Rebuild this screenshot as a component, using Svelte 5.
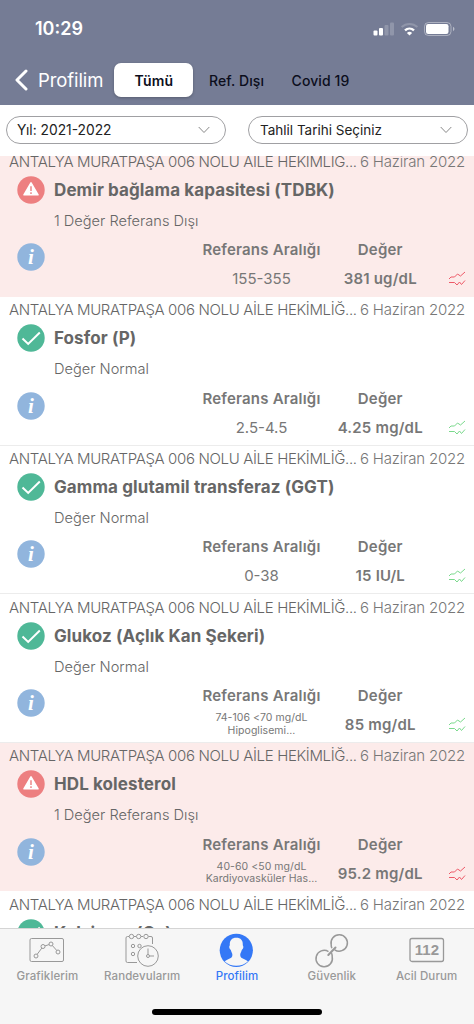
<script>
  const clinic = 'ANTALYA MURATPAŞA 006 NOLU AİLE HEKİMLİĞ...'
  const date = '6 Haziran 2022'

  let tabs = ['Tümü', 'Ref. Dışı', 'Covid 19']
  let activeTab = $state('Tümü')

  let results = [
    { name: 'Demir bağlama kapasitesi (TDBK)', range: ['155-355'], value: '381 ug/dL', alert: true },
    { name: 'Fosfor (P)', range: ['2.5-4.5'], value: '4.25 mg/dL' },
    { name: 'Gamma glutamil transferaz (GGT)', range: ['0-38'], value: '15 IU/L' },
    { name: 'Glukoz (Açlık Kan Şekeri)', range: ['74-106 <70 mg/dL', 'Hipoglisemi...'], value: '85 mg/dL' },
    { name: 'HDL kolesterol', range: ['40-60 <50 mg/dL', 'Kardiyovasküler Has...'], value: '95.2 mg/dL', alert: true },
    { name: 'Kalsiyum (Ca)' }
  ]
</script>

<div class="app">
  <header>
    <div class="status">
      <span class="clock">10:29</span>
      <svg width="84" height="16" viewBox="0 0 84 16">
        <g fill="#fff">
          <rect x="1.500" y="9.500" width="4" height="5" rx="1" />
          <rect x="7" y="7" width="4" height="7.500" rx="1" />
          <rect x="12.500" y="4" width="4" height="10.500" rx="1" opacity=".2" />
          <rect x="18" y="1.500" width="4" height="13" rx="1" opacity=".2" />
          <path d="M37.500 14.500l-2.600-2.600a3.800 3.800 0 0 1 5.200 0z" />
        </g>
        <path d="M33 9.400a6.700 6.700 0 0 1 9 0" fill="none" stroke="#fff" stroke-width="2.400" />
        <path d="M29.600 6a11.600 11.600 0 0 1 15.800 0" fill="none" stroke="#fff" stroke-width="2" opacity=".2" />
        <rect x="52.500" y="1.500" width="26.500" height="13" rx="4" fill="none" stroke="#fff" opacity=".4" />
        <rect x="54" y="3" width="22.500" height="10" rx="2.200" fill="#fff" />
        <path d="M81 5.800q3 2.200 0 4.400z" fill="#fff" opacity=".5" />
      </svg>
    </div>
    <nav>
      <button class="back">
        <svg width="14" height="22" viewBox="0 0 14 22"><path d="M12 2L3 11l9 9" fill="none" stroke="#fff" stroke-width="3" stroke-linecap="round" stroke-linejoin="round" /></svg>
        <span>Profilim</span>
      </button>
      <div class="tabs">
        {#each tabs as tab}
          <button class="tab" class:active={tab === activeTab} onclick={() => (activeTab = tab)}>{tab}</button>
        {/each}
      </div>
    </nav>
  </header>

  <div class="filters">
    {#each ['Yıl: 2021-2022', 'Tahlil Tarihi Seçiniz'] as label, i}
      <button class="select" class:year={i === 0}>
        <span>{label}</span>
        <svg width="12" height="8" viewBox="0 0 12 8"><path d="M.7 1L6 6.500 11.300 1" fill="none" stroke="#888" /></svg>
      </button>
    {/each}
  </div>

  <main>
    {#each results as item}
      <article class:alert={item.alert}>
        <div class="source">
          <span class="clinic">{clinic}</span>
          <span class="date">{date}</span>
        </div>
        <div class="title">
          <svg class="mark" width="28" height="28" viewBox="0 0 28 28">
            {#if item.alert}
              <circle cx="14" cy="14" r="13.700" fill="#ed7f80" />
              <path d="M13.300 6.600q.7-1.200 1.400 0l7 11.900q.5 1-.6 1H6.900q-1.100 0-.6-1z" fill="#fff" />
              <path d="M14 10.300v4.700M14 16.200v1.700" stroke="#ed7f80" stroke-width="1.400" />
            {:else}
              <circle cx="14" cy="14" r="13.700" fill="#4fb897" />
              <path d="M5.500 14.500l5.700 5.400L22.800 8.500" fill="none" stroke="#fff" stroke-width="2" />
            {/if}
          </svg>
          <h2>{item.name}</h2>
        </div>
        {#if item.value}
          <p class="note">{item.alert ? '1 Değer Referans Dışı' : 'Değer Normal'}</p>
          <div class="details">
            <svg class="info" width="28" height="28" viewBox="0 0 28 28">
              <circle cx="14" cy="14" r="13.700" fill="#91b5dd" />
              <text x="14" y="21" text-anchor="middle">i</text>
            </svg>
            <div class="range">
              <h3>Referans Aralığı</h3>
              <div class="amount" class:small={item.range.length > 1}>
                {#each item.range as line}<span>{line}</span>{/each}
              </div>
            </div>
            <div class="value">
              <h3>Değer</h3>
              <div class="amount"><b>{item.value}</b></div>
            </div>
            <svg class="trend" width="18" height="15" viewBox="0 0 18 15">
              <path d="M1 8l2-2h3.500L9.500 3l3 2L17 1M1 11.500h5.500L9 14l2.500-3 2 2.500L17 9.500" />
            </svg>
          </div>
        {/if}
      </article>
    {/each}
  </main>

  <footer>
    <div class="menu">
      <div class="item">
        <svg width="36" height="36" viewBox="0 0 36 36">
          <rect x="1" y="5.500" width="33.500" height="23" rx="1.500" />
          <circle cx="7" cy="23" r="2" /><circle cx="14" cy="13.500" r="2" /><circle cx="22" cy="11" r="2" /><circle cx="29" cy="19" r="2" />
          <path d="M8.200 21.300l4.600-6.200M16 12.900l4-1.300M23.300 12.500l4.500 5" />
        </svg>
        <span>Grafiklerim</span>
      </div>
      <div class="item">
        <svg width="36" height="36" viewBox="0 0 36 36">
          <path d="M5 3.500H3.500Q2 3.500 2 5v23q0 1.500 1.500 1.500H13M10 3.500h2M17 3.500h2M24.500 3.500h2.500q1.500 0 1.500 1.500v6" />
          <circle cx="7.500" cy="3.500" r="2.200" /><circle cx="14.700" cy="3.500" r="2.200" /><circle cx="22" cy="3.500" r="2.200" />
          <circle cx="9" cy="13" r="1.700" /><circle cx="15.500" cy="13" r="1.700" /><circle cx="9" cy="21" r="1.700" />
          <circle cx="24" cy="23" r="10.300" />
          <path d="M24 15.500v6M25.500 23H30" /><circle cx="24" cy="23" r="1.500" />
        </svg>
        <span>Randevularım</span>
      </div>
      <div class="item current">
        <svg width="36" height="36" viewBox="0 0 36 36">
          <circle class="solid" cx="17.300" cy="17.300" r="16.600" />
          <path class="face" d="M17.300 4.800c-4.500 0-6.700 2.700-6.500 7 .1 1.300-.8 1-.5 2.700.3 1.500 1 2 1.500 2.400.6 2.500 1.600 3 1.600 5.100 0 2.600-1.500 3.200-4.700 4.500-1.400.6-2.400 1.300-3 2.100 5.800 5.600 17.400 5.600 23.200 0-.6-.8-1.600-1.500-3-2.100-3.200-1.300-4.700-1.900-4.700-4.500 0-2.100 1-2.600 1.600-5.100.5-.4 1.200-.9 1.500-2.400.3-1.700-.6-1.400-.5-2.700.2-4.300-2-7-6.500-7z" />
        </svg>
        <span>Profilim</span>
      </div>
      <div class="item">
        <svg width="36" height="36" viewBox="0 0 36 36">
          <g stroke-width="1.500">
            <path d="M14.500 18.600a8.200 8.200 0 1 0 3.700 5.200q.1-2-.7-3.800" />
            <path d="M20.700 16.800a8.200 8.200 0 1 0-3.500-5q-.1 1.800.7 3.500" />
            <path d="M14.300 22l7.200-7.500" stroke-width="2" stroke-linecap="round" />
          </g>
        </svg>
        <span>Güvenlik</span>
      </div>
      <div class="item">
        <svg width="36" height="36" viewBox="0 0 36 36">
          <rect x="1" y="5.500" width="33.500" height="23" rx="2" stroke-width="1.300" />
          <text x="18" y="22" text-anchor="middle">112</text>
        </svg>
        <span>Acil Durum</span>
      </div>
    </div>
    <div class="home"></div>
  </footer>
</div>

<style>
  :global(body) {
    background: #fff;
  }

  .app {
    width: 474px;
    height: 1024px;
    display: flex;
    flex-direction: column;
    overflow: hidden;
    font-family: Inter, "Noto Sans", sans-serif;
    color: #666;
  }

  button {
    border: 0;
    padding: 0;
    background: none;
    font: inherit;
    color: inherit;
  }

  h2, h3, p {
    margin: 0;
  }

  svg {
    display: block;
    flex: none;
  }

  header {
    flex: none;
    height: 105px;
    background: #757c95;
  }

  .status {
    height: 57px;
    padding: 0 18px 0 35px;
    display: flex;
    align-items: center;
    justify-content: space-between;
    color: #fff;
  }

  .clock {
    font-size: 18px;
    font-weight: 600;
  }

  nav {
    display: flex;
    align-items: center;
    height: 46px;
    padding-left: 14px;
  }

  .back {
    display: flex;
    align-items: center;
    gap: 10px;
    width: 100px;
    color: #fff;
    font-size: 18.500px;
    letter-spacing: -.1px;
    white-space: nowrap;
  }

  .tabs {
    display: flex;
  }

  .tab {
    height: 34px;
    padding: 0 13.500px 0 14px;
    font-size: 14px;
    font-weight: 500;
    letter-spacing: .1px;
    color: #0c0e1c;
    white-space: nowrap;
  }

  .tab.active {
    width: 79px;
    margin-right: 2px;
    background: #fff;
    border-radius: 7px;
    font-weight: 600;
    box-shadow: 0 1px 3px rgba(0, 0, 0, .25);
  }

  .filters {
    flex: none;
    height: 51px;
    padding: 11px 6px 0 6px;
    box-sizing: border-box;
    display: flex;
    justify-content: space-between;
  }

  .select {
    width: 220px;
    height: 28px;
    padding: 0 15px 0 11px;
    border: 1px solid #a0a0a3;
    border-radius: 14px;
    display: flex;
    align-items: center;
    justify-content: space-between;
    font-size: 13.500px;
    color: #222;
  }

  .year {
    padding-left: 10px;
    font-size: 13.800px;
  }

  main {
    flex: 1;
    min-height: 0;
    overflow: hidden;
  }

  article {
    height: 148.600px;
    box-sizing: border-box;
    padding-top: 3.400px;
    border-bottom: 1px solid #ececec;
  }

  article:first-child {
    margin-top: -7.600px;
  }

  article.alert {
    background: #fcebea;
    border-bottom-color: #fcebea;
  }

  .source {
    display: flex;
    justify-content: space-between;
    height: 19px;
    line-height: 19px;
    padding: 0 9px;
    font-size: 15px;
    font-weight: 300;
    white-space: nowrap;
  }

  .clinic {
    letter-spacing: -.350px;
  }

  .date {
    letter-spacing: -.200px;
    color: #777;
  }

  .title {
    display: flex;
    align-items: center;
    gap: 9px;
    height: 28px;
    margin-top: 5px;
    padding: 0 17px;
  }

  h2 {
    font-size: 17px;
    font-weight: 700;
    letter-spacing: .1px;
    white-space: nowrap;
  }

  .note {
    height: 20px;
    margin: 7px 0 0 54px;
    line-height: 20px;
    font-size: 14.600px;
    font-weight: 300;
  }

  .details {
    display: flex;
    margin-top: 8.500px;
    padding-left: 17px;
  }

  .info {
    margin-top: 4px;
  }

  .info text {
    font: italic bold 21px "Liberation Serif", serif;
    fill: #fff;
  }

  .range {
    width: 134px;
    margin-left: 149.500px;
    text-align: center;
  }

  .value {
    width: 103.500px;
    text-align: center;
  }

  h3 {
    height: 22px;
    line-height: 22px;
    font-size: 15px;
    font-weight: 600;
    letter-spacing: .2px;
    color: #777;
    white-space: nowrap;
  }

  .amount {
    display: flex;
    flex-direction: column;
    justify-content: center;
    height: 35px;
    font-size: 15px;
    letter-spacing: .2px;
    color: #777;
    white-space: nowrap;
  }

  .amount.small {
    font-size: 10.500px;
    line-height: 12.500px;
    letter-spacing: .050px;
  }

  .amount:not(.small) span {
    letter-spacing: 0;
  }

  .amount b {
    font-weight: 600;
  }

  .trend {
    margin: 32px 0 0 15.500px;
    fill: none;
    stroke: #7ad98c;
  }

  .alert .trend {
    stroke: #ee5a68;
  }

  footer {
    flex: none;
    height: 96px;
    box-sizing: border-box;
    border-top: 1px solid #d4d4d4;
    background: #f6f6f6;
  }

  .menu {
    display: flex;
    height: 80px;
  }

  .item {
    flex: 1;
    display: flex;
    flex-direction: column;
    align-items: center;
    padding-top: 4px;
    font-size: 11.500px;
    font-weight: 500;
    letter-spacing: .1px;
    color: #999;
  }

  .item svg {
    fill: none;
    stroke: #999;
    overflow: visible;
  }

  .item text {
    font: 700 15px "Liberation Sans", sans-serif;
    fill: #999;
    stroke: none;
  }

  .current {
    color: #3478f6;
  }

  .item .solid {
    fill: #3478f6;
    stroke: none;
  }

  .item .face {
    fill: #f6f6f6;
    stroke: none;
  }

  .home {
    width: 170px;
    height: 6px;
    margin: 0 auto;
    border-radius: 3px;
    background: #000;
  }
</style>
